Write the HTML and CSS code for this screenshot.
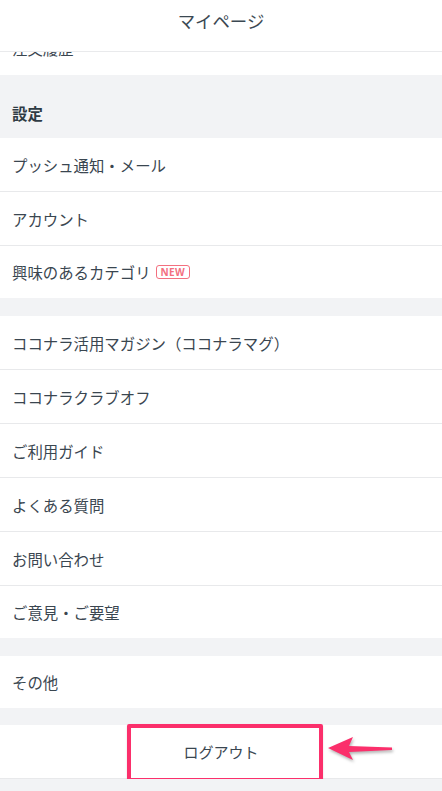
FILE: index.html
```html
<!DOCTYPE html>
<html lang="ja">
<head>
<meta charset="utf-8">
<link rel="stylesheet" href="styles.css">
</head>
<body>
<div class="app">
  <header class="topbar"><h1 class="title">マイページ</h1></header>
  <main class="content">
    <div class="row row-partial">注文履歴</div>
    <div class="section-head">設定</div>
    <div class="group">
      <div class="row">プッシュ通知・メール</div>
      <div class="row">アカウント</div>
      <div class="row">興味のあるカテゴリ<span class="badge">NEW</span></div>
    </div>
    <div class="gap"></div>
    <div class="group">
      <div class="row">ココナラ活用マガジン（ココナラマグ）</div>
      <div class="row">ココナラクラブオフ</div>
      <div class="row">ご利用ガイド</div>
      <div class="row">よくある質問</div>
      <div class="row">お問い合わせ</div>
      <div class="row">ご意見・ご要望</div>
    </div>
    <div class="gap"></div>
    <div class="group">
      <div class="row">その他</div>
    </div>
    <div class="gap gap-small"></div>
    <div class="group logout-group">
      <div class="row row-center">ログアウト</div>
      <div class="highlight"></div>
      <svg class="arrow" width="72" height="34" viewBox="0 0 72 34">
        <path d="M2 17 L27 6 L23 15 L66 16.5 L66 19 L23 21 L27 29 Z" fill="#fb2f6b"/>
      </svg>
    </div>
  </main>
</div>
</body>
</html>
```
FILE: styles.css
```css
* { box-sizing: border-box; }
html, body { margin: 0; padding: 0; }
body {
  background: #f2f3f5;
  font-family: "Noto Sans CJK JP", "Noto Sans", sans-serif;
  color: #3a4650;
}
.app {
  width: 442px;
  height: 791px;
  overflow: hidden;
  background: #f2f3f5;
  position: relative;
}
.topbar {
  height: 52px;
  background: #fff;
  border-bottom: 1px solid #e9eaec;
  display: flex;
  justify-content: center;
  align-items: flex-start;
  padding-top: 8px;
  position: relative;
  z-index: 2;
}
.title {
  margin: 0;
  font-size: 17.4px;
  font-weight: 400;
  line-height: 26px;
  color: #3b4852;
}
.content {
  overflow: hidden;
}
.row {
  height: 54px;
  background: #fff;
  border-bottom: 1px solid #e8e9eb;
  padding-left: 12px;
  display: flex;
  align-items: center;
  font-size: 15.4px;
  color: #3a4650;
}
.group .row:last-child { border-bottom: none; height: 52px; }
.row-partial {
  margin-top: -31px;
  height: 54px;
  border-bottom: none;
}
.section-head {
  height: 63px;
  padding: 26px 12px 13px;
  font-size: 15.4px;
  font-weight: 700;
  line-height: 24px;
  color: #2f3b44;
  background: #f2f3f5;
}
.badge {
  margin-left: 5px;
  border: 1px solid #f3707f;
  color: #f3707f;
  border-radius: 3px;
  font-family: "Noto Sans", sans-serif;
  font-size: 10px;
  font-weight: 700;
  line-height: 12px;
  padding: 0 4px;
  letter-spacing: 0.4px;
}
.gap { height: 18px; }
.gap-small { height: 17px; }
.logout-group { position: relative; }
.logout-group .row:last-child { height: 57px; }
.row-center {
  justify-content: center;
  padding-left: 0;
  font-size: 15px;
}
.highlight {
  position: absolute;
  left: 127px;
  top: -1px;
  width: 196px;
  height: 58px;
  border: 4px solid #fb2f6b;
  border-radius: 2px;
  box-shadow: 0 1px 2px rgba(0,0,0,0.15);
}
.arrow {
  position: absolute;
  left: 326px;
  top: 6px;
  filter: drop-shadow(1px 2px 1.5px rgba(0,0,0,0.3));
}
```
